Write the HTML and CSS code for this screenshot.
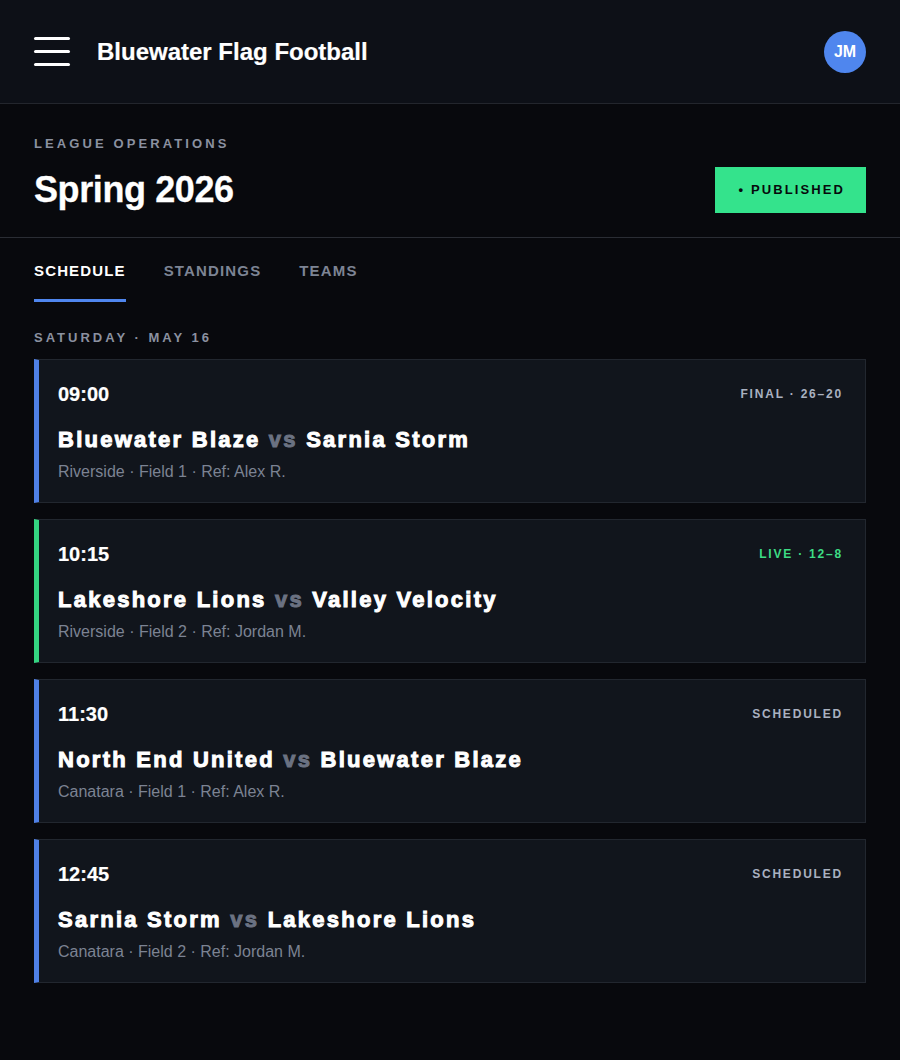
FILE: index.html
```html
<!DOCTYPE html>
<html lang="en">
<head>
  <meta charset="UTF-8">
  <title>Bluewater Flag Football</title>
  <link rel="stylesheet" href="styles.css">
</head>
<body>
  <header class="topbar">
    <div class="menu-btn">
      <span></span><span></span><span></span>
    </div>
    <div class="brand">Bluewater Flag Football</div>
    <div class="avatar">JM</div>
  </header>

  <section class="season">
    <div>
      <div class="eyebrow">League Operations</div>
      <h1>Spring 2026</h1>
    </div>
    <div class="badge">&bull; Published</div>
  </section>

  <nav class="tabs">
    <a class="tab active">Schedule</a>
    <a class="tab">Standings</a>
    <a class="tab">Teams</a>
  </nav>

  <main class="schedule">
    <div class="day">Saturday · May 16</div>

    <div class="game">
      <div class="game-top">
        <span class="time">09:00</span>
        <span class="status">Final · 26–20</span>
      </div>
      <div class="teams">Bluewater Blaze <span class="vs">vs</span> Sarnia Storm</div>
      <div class="meta">Riverside · Field 1 · Ref: Alex R.</div>
    </div>

    <div class="game live">
      <div class="game-top">
        <span class="time">10:15</span>
        <span class="status">Live · 12–8</span>
      </div>
      <div class="teams">Lakeshore Lions <span class="vs">vs</span> Valley Velocity</div>
      <div class="meta">Riverside · Field 2 · Ref: Jordan M.</div>
    </div>

    <div class="game">
      <div class="game-top">
        <span class="time">11:30</span>
        <span class="status">Scheduled</span>
      </div>
      <div class="teams">North End United <span class="vs">vs</span> Bluewater Blaze</div>
      <div class="meta">Canatara · Field 1 · Ref: Alex R.</div>
    </div>

    <div class="game">
      <div class="game-top">
        <span class="time">12:45</span>
        <span class="status">Scheduled</span>
      </div>
      <div class="teams">Sarnia Storm <span class="vs">vs</span> Lakeshore Lions</div>
      <div class="meta">Canatara · Field 2 · Ref: Jordan M.</div>
    </div>
  </main>
</body>
</html>
```

FILE: styles.css
```css
body {
  margin: 0;
  font-family: "Liberation Sans", Arial, sans-serif;
  background-color: #08090d;
  color: #ffffff;
}

.topbar {
  display: flex;
  align-items: center;
  height: 103px;
  padding: 0 34px;
  background-color: #0d1017;
  border-bottom: 1px solid #23262d;
}

.menu-btn {
  display: flex;
  flex-direction: column;
  gap: 10px;
  width: 36px;
  margin-right: 27px;
}

.menu-btn span {
  display: block;
  height: 3px;
  background-color: #ffffff;
  border-radius: 2px;
}

.brand {
  font-size: 24px;
  font-weight: bold;
  flex: 1;
  -webkit-text-stroke: 0.2px #ffffff;
}

.avatar {
  width: 42px;
  height: 42px;
  border-radius: 50%;
  background-color: #4f86ee;
  display: flex;
  align-items: center;
  justify-content: center;
  font-size: 16px;
  font-weight: bold;
}

.season {
  display: flex;
  justify-content: space-between;
  align-items: flex-end;
  padding: 32px 34px 24px;
  border-bottom: 1px solid #2a2d34;
}

.eyebrow {
  font-size: 13px;
  font-weight: bold;
  letter-spacing: 3.1px;
  text-transform: uppercase;
  color: #8b91a0;
}

h1 {
  margin: 16px 0 0;
  font-size: 36px;
  line-height: 46px;
  letter-spacing: -0.4px;
  -webkit-text-stroke: 0.3px #ffffff;
}

.badge {
  background-color: #34e38c;
  color: #07090c;
  font-size: 13px;
  font-weight: bold;
  letter-spacing: 2.1px;
  text-transform: uppercase;
  padding: 0 21px 0 24px;
  height: 46px;
  line-height: 46px;
}

.tabs {
  display: flex;
  gap: 38px;
  padding: 0 34px;
}

.tab {
  padding: 24px 0 20px;
  font-size: 15px;
  font-weight: bold;
  letter-spacing: 1.15px;
  text-transform: uppercase;
  color: #7d8494;
  border-bottom: 3px solid transparent;
}

.tab.active {
  color: #ffffff;
  border-bottom-color: #4f86ee;
}

.schedule {
  padding: 28px 34px 40px;
}

.day {
  font-size: 13px;
  font-weight: bold;
  letter-spacing: 3px;
  text-transform: uppercase;
  color: #8b91a0;
  margin-bottom: 14px;
}

.game {
  background-color: #11151c;
  border: 1px solid #22272f;
  border-left: 5px solid #4f80e6;
  padding: 22px 22px 20px 19px;
  margin-bottom: 16px;
}

.game.live {
  border-left-color: #34d581;
}

.game-top {
  display: flex;
  justify-content: space-between;
  align-items: center;
  height: 24px;
}

.time {
  font-size: 20px;
  font-weight: bold;
  -webkit-text-stroke: 0.2px #ffffff;
}

.status {
  font-size: 12px;
  font-weight: bold;
  letter-spacing: 1.8px;
  text-transform: uppercase;
  color: #a9b1c0;
}

.live .status {
  color: #3ddc84;
}

/* heavy matchup line: bold face thickened with a stroke */
.teams {
  margin-top: 20px;
  font-size: 22px;
  font-weight: 900;
  letter-spacing: 2.25px;
  line-height: 28px;
  -webkit-text-stroke: 1px #ffffff;
}

.vs {
  color: #6b7282;
  -webkit-text-stroke-color: #6b7282;
}

.meta {
  margin-top: 8px;
  font-size: 16px;
  line-height: 20px;
  color: #7c8393;
}
```
